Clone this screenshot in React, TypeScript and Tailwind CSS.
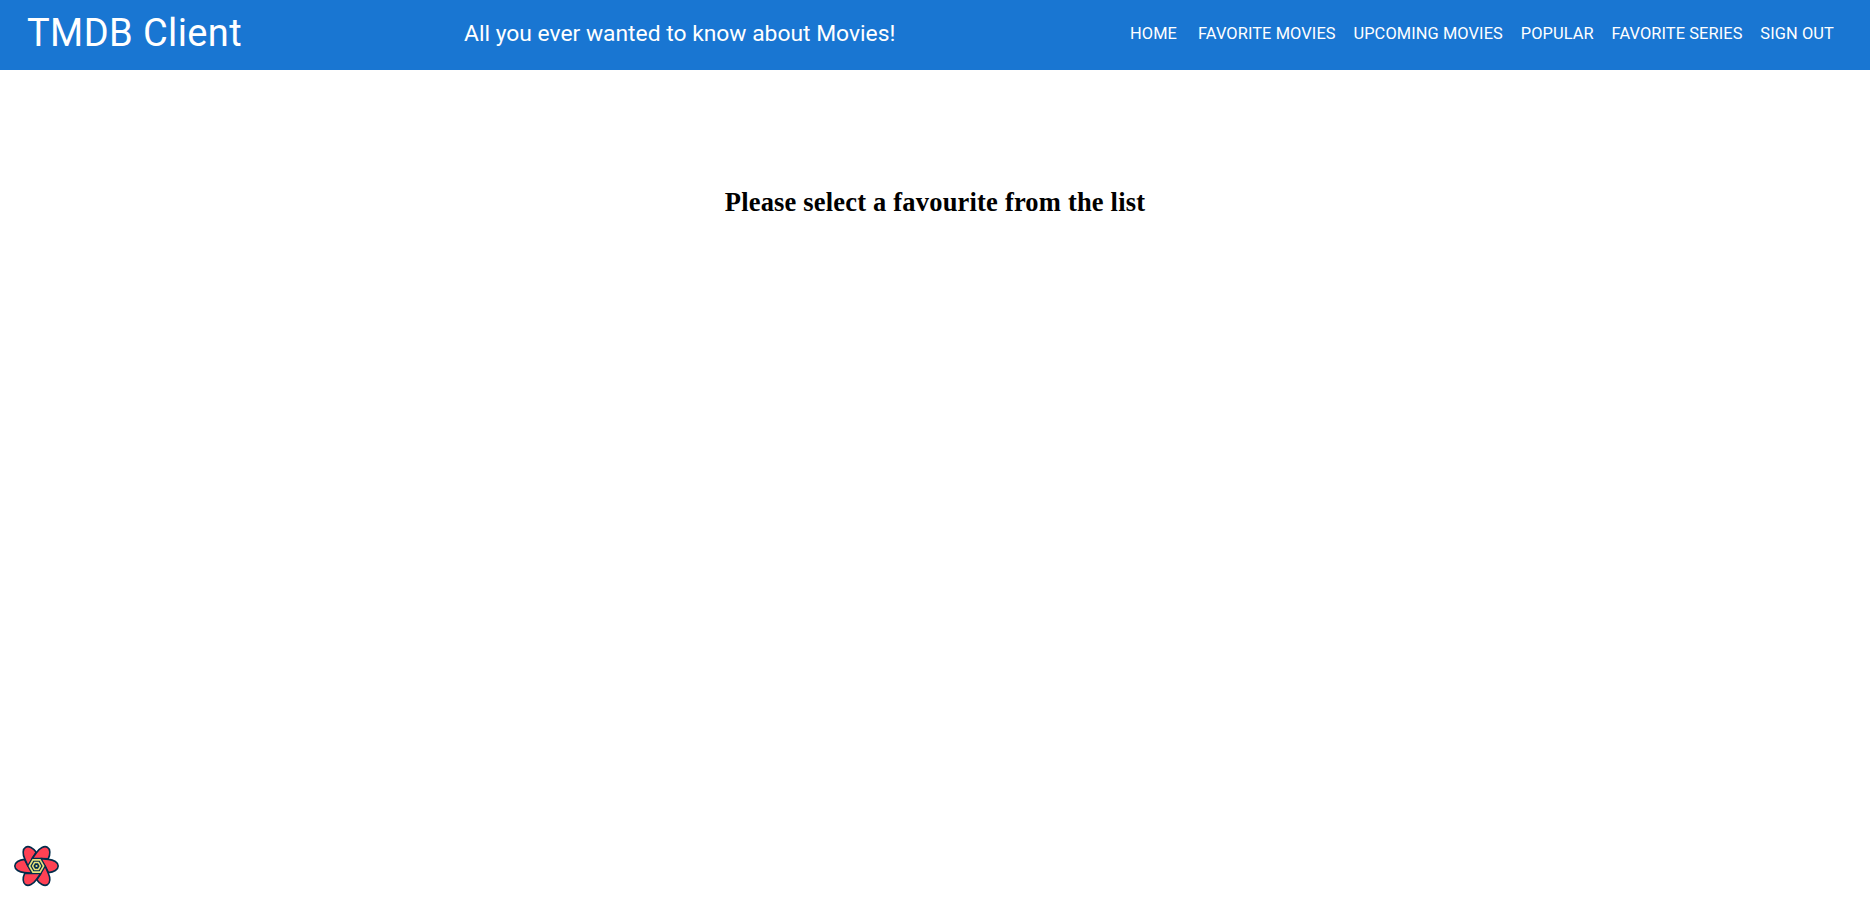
const NAV = ["Favorite Movies", "Upcoming Movies", "Popular", "Favorite Series", "Sign Out"];

function Flower() {
  const petal = "M-8.6 0 L-12 -6.6 C-17.3 -6.2 -21.7 -3.6 -21.7 0 C-21.7 3.6 -17.3 6.2 -12 6.6 L-4.3 7.4 Z";
  return (
    <svg viewBox="-23.5 -23 46 46" className="h-[46px] w-[46px]">
      <g fill="#ff4154" stroke="#002c4b" strokeWidth="1.6" strokeLinejoin="round">
        {[0, 60, 120, 180, 240, 300].map((a) => (
          <path key={a} d={petal} transform={`rotate(${a})`} />
        ))}
      </g>
      <polygon points="-9,0 -4.5,-7.8 4.5,-7.8 9,0 4.5,7.8 -4.5,7.8" fill="#002c4b" />
      <g fill="none" stroke="#e6e37c">
        <polygon points="-7.1,0 -3.55,-6.15 3.55,-6.15 7.1,0 3.55,6.15 -3.55,6.15" strokeWidth="1.6" />
        <polygon points="-3.9,0 -1.95,-3.4 1.95,-3.4 3.9,0 1.95,3.4 -1.95,3.4" strokeWidth="1.5" />
      </g>
      <circle r="1.1" fill="#e6e37c" />
    </svg>
  );
}

export default function App() {
  return (
    <div className="relative min-h-[898px] bg-white">
      <header className="flex h-[70px] items-center bg-[#1976d2] pb-[3px] pl-[27px] font-['Roboto',sans-serif] whitespace-nowrap text-white">
        <h1 className="w-[437px] pb-0.5 text-[38px] leading-none tracking-[0.4px]">TMDB Client</h1>
        <p className="w-[654px] text-[22.84px] leading-8">All you ever wanted to know about Movies!</p>
        <nav className="flex pl-3 text-[16.4px] leading-6 tracking-[0.1px] uppercase">
          <a className="mr-[21px]">Home</a>
          <div className="flex gap-[17.8px]">
            {NAV.map((n) => (
              <a key={n}>{n}</a>
            ))}
          </div>
        </nav>
      </header>
      <main className="pt-[116px] text-center">
        <h2 className="font-['Liberation_Serif',serif] text-[26.5px] leading-8 font-bold tracking-[0.19px] text-black">
          Please select a favourite from the list
        </h2>
      </main>
      <button className="absolute bottom-[9px] left-[13px]" aria-label="Open query devtools">
        <Flower />
      </button>
    </div>
  );
}
